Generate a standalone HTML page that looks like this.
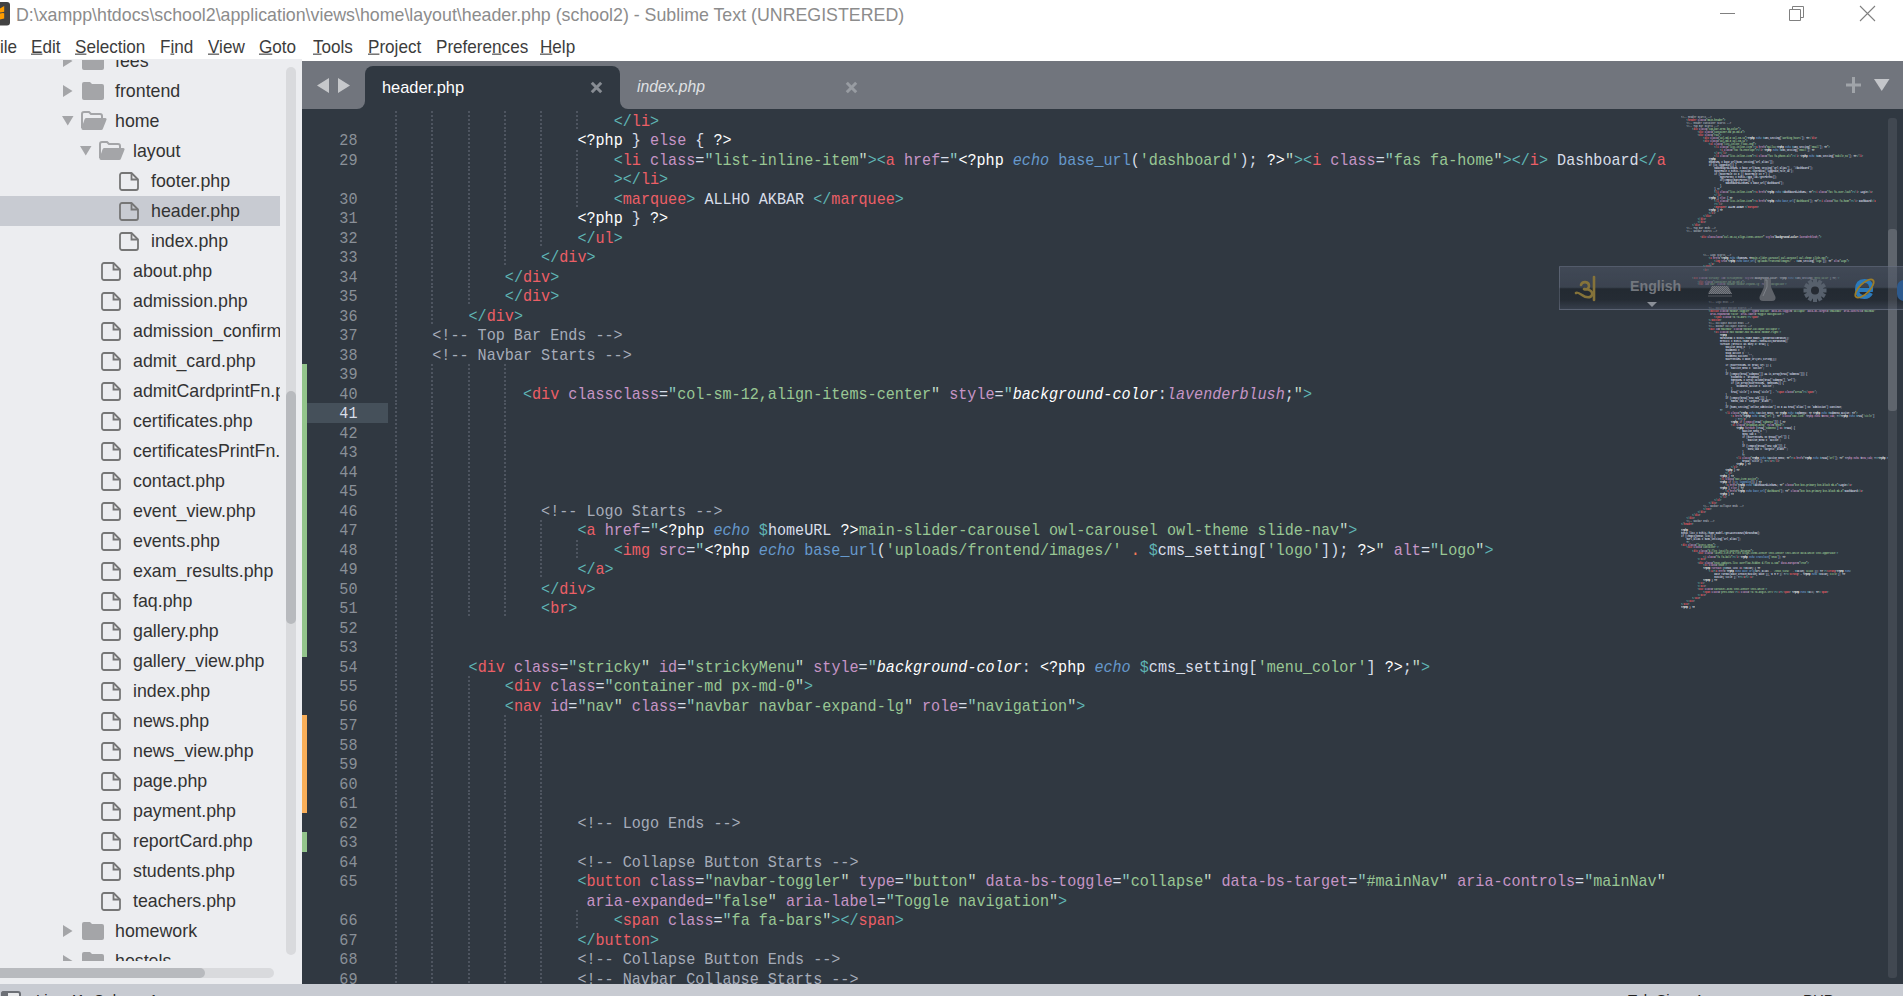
<!DOCTYPE html><html><head><meta charset="utf-8"><style>
*{margin:0;padding:0;box-sizing:border-box}
html,body{width:1903px;height:996px;overflow:hidden;background:#fff;position:relative;font-family:"Liberation Sans",sans-serif}
.abs{position:absolute}
#title{left:16px;top:4px;font-size:17.8px;color:#8c8c8c;white-space:pre;line-height:22px}
.menu{position:absolute;top:36px;font-size:17.1px;color:#3c3c3c;white-space:pre;line-height:20px;transform:scaleY(1.1);transform-origin:0 0}
.menu u{text-decoration:underline;text-underline-offset:1px;text-decoration-thickness:1px}
#sidebar{left:0;top:59px;width:302px;height:925px;background:#ecedf0;overflow:hidden}
#tree{position:absolute;left:0;top:1px;width:280px;height:901px;overflow:hidden}
.row{position:absolute;left:0;width:280px;height:30px}
.row.sel{background:#c8cbd2}
.rt{position:absolute;top:4px;font-size:17.8px;color:#333;white-space:pre;line-height:22px}
#editor{left:302px;top:61px;width:1601px;height:922.5px;background:#303841;overflow:hidden}
.code{position:absolute;left:0;white-space:pre;font-family:"Liberation Mono",monospace;font-size:15.12px;line-height:19.5px;height:19.5px;color:#d8dee9;transform:scaleY(1.08);transform-origin:0 3px}
.ln{position:absolute;width:60px;text-align:right;font-family:"Liberation Mono",monospace;font-size:15.12px;line-height:19.5px;color:#8a9098;transform:scaleY(1.08);transform-origin:0 3px}
.t{color:#ec5f66}.p{color:#5fb4b4}.a{color:#c695c6}.s{color:#99c794}.q{color:#8cc8c0}.q2{color:#c4d8c6}
.w{color:#ffffff}.f{color:#d8dee9}.c{color:#a6acb9}.k{color:#c695c6}.e{color:#6699cc;font-style:italic}
.fn{color:#6699cc}.v{color:#5fb4b4}.o{color:#f97b58}.ci{color:#ffffff;font-style:italic}.cv{color:#c695c6;font-style:italic}
.g{position:absolute;width:2px;background:repeating-linear-gradient(to bottom,#4e5560 0,#4e5560 2px,transparent 2px,transparent 4px)}
#mini{position:absolute;left:1379px;top:54.8px;transform-origin:0 0;transform:scale(0.1533);width:1400px}
#mini .code{position:relative;font-weight:bold;transform:scaleY(1.1);transform-origin:0 60%}
#status{left:0;top:983.5px;width:1903px;height:13px;background:#c8cbd2;overflow:hidden}
</style></head><body><svg class="abs" style="left:0;top:0" width="12" height="28" viewBox="0 0 12 28"><path d="M-14 5a3 3 0 0 1 3-3H7a3 3 0 0 1 3 3V22.5a3 3 0 0 1-3 3H-11z" fill="#424242"/><path d="M0 8.5Q2 7 4.2 6V11.8Q2 12.2 0 12.6z" fill="#ff9d00"/><path d="M0 13.6Q2 12.8 4.2 13.2V18.6Q2 19.3 0 19.6z" fill="#ff9d00"/></svg><div id="title" class="abs">D:\xampp\htdocs\school2\application\views\home\layout\header.php (school2) - Sublime Text (UNREGISTERED)</div><div class="abs" style="left:1720px;top:13px;width:15px;height:1px;background:#808080"></div><svg class="abs" style="left:1788px;top:5px" width="18" height="18"><path d="M1.5 4.5H12.5V15.5H1.5z M4.5 4.5V1.5H15.5V12.5H12.5" fill="none" stroke="#808080" stroke-width="1"/></svg><svg class="abs" style="left:1859px;top:5px" width="18" height="18"><path d="M1 1L16 16M16 1L1 16" stroke="#808080" stroke-width="1.1"/></svg><div class="menu" style="left:0px">ile</div><div class="menu" style="left:31px"><u>E</u>dit</div><div class="menu" style="left:75px"><u>S</u>election</div><div class="menu" style="left:160px">F<u>i</u>nd</div><div class="menu" style="left:208px"><u>V</u>iew</div><div class="menu" style="left:259px"><u>G</u>oto</div><div class="menu" style="left:313px"><u>T</u>ools</div><div class="menu" style="left:368px"><u>P</u>roject</div><div class="menu" style="left:436px">Prefere<u>n</u>ces</div><div class="menu" style="left:540px"><u>H</u>elp</div><div id="sidebar" class="abs"><div id="tree"><div class="row" style="top:-14px"><svg class="abs" style="left:63px;top:9px" width="10" height="12"><path d="M0 0L9.5 6L0 12z" fill="#a4a5a8"/></svg><svg class="abs" style="left:82px;top:6px" width="23" height="19" viewBox="0 0 23 19"><path d="M0 2a2 2 0 0 1 2-2h6l2 2h10a2 2 0 0 1 2 2v12a2 2 0 0 1-2 2H2a2 2 0 0 1-2-2z" fill="#a4a5a8"/></svg><div class="rt" style="left:115px">fees</div></div><div class="row" style="top:16px"><svg class="abs" style="left:63px;top:9px" width="10" height="12"><path d="M0 0L9.5 6L0 12z" fill="#a4a5a8"/></svg><svg class="abs" style="left:82px;top:6px" width="23" height="19" viewBox="0 0 23 19"><path d="M0 2a2 2 0 0 1 2-2h6l2 2h10a2 2 0 0 1 2 2v12a2 2 0 0 1-2 2H2a2 2 0 0 1-2-2z" fill="#a4a5a8"/></svg><div class="rt" style="left:115px">frontend</div></div><div class="row" style="top:46px"><svg class="abs" style="left:62px;top:10px" width="12" height="10"><path d="M0 0H11.5L5.75 9.5z" fill="#a4a5a8"/></svg><svg class="abs" style="left:81px;top:5px" width="27" height="20" viewBox="0 0 27 20"><path d="M1 17V3a2 2 0 0 1 2-2h5l2 2h9a2 2 0 0 1 2 2v2" fill="none" stroke="#a4a5a8" stroke-width="2"/><path d="M5 7h19a1.5 1.5 0 0 1 1.4 2L22 17.5a2 2 0 0 1-2 1.5H2a1.5 1.5 0 0 1-1.4-2L3.6 8.3A2 2 0 0 1 5 7z" fill="#a4a5a8"/></svg><div class="rt" style="left:115px">home</div></div><div class="row" style="top:76px"><svg class="abs" style="left:80px;top:10px" width="12" height="10"><path d="M0 0H11.5L5.75 9.5z" fill="#a4a5a8"/></svg><svg class="abs" style="left:99px;top:5px" width="27" height="20" viewBox="0 0 27 20"><path d="M1 17V3a2 2 0 0 1 2-2h5l2 2h9a2 2 0 0 1 2 2v2" fill="none" stroke="#a4a5a8" stroke-width="2"/><path d="M5 7h19a1.5 1.5 0 0 1 1.4 2L22 17.5a2 2 0 0 1-2 1.5H2a1.5 1.5 0 0 1-1.4-2L3.6 8.3A2 2 0 0 1 5 7z" fill="#a4a5a8"/></svg><div class="rt" style="left:133px">layout</div></div><div class="row" style="top:106px"><svg class="abs" style="left:119px;top:6px" width="20" height="19" viewBox="0 0 20 19"><path d="M3 1h9.5L19 7.5V16a2 2 0 0 1-2 2H3a2 2 0 0 1-2-2V3a2 2 0 0 1 2-2z" fill="none" stroke="#767676" stroke-width="1.8" stroke-linejoin="round"/><path d="M12.5 1v6.5H19" fill="none" stroke="#767676" stroke-width="1.8"/></svg><div class="rt" style="left:151px">footer.php</div></div><div class="row sel" style="top:136px"><svg class="abs" style="left:119px;top:6px" width="20" height="19" viewBox="0 0 20 19"><path d="M3 1h9.5L19 7.5V16a2 2 0 0 1-2 2H3a2 2 0 0 1-2-2V3a2 2 0 0 1 2-2z" fill="none" stroke="#767676" stroke-width="1.8" stroke-linejoin="round"/><path d="M12.5 1v6.5H19" fill="none" stroke="#767676" stroke-width="1.8"/></svg><div class="rt" style="left:151px">header.php</div></div><div class="row" style="top:166px"><svg class="abs" style="left:119px;top:6px" width="20" height="19" viewBox="0 0 20 19"><path d="M3 1h9.5L19 7.5V16a2 2 0 0 1-2 2H3a2 2 0 0 1-2-2V3a2 2 0 0 1 2-2z" fill="none" stroke="#767676" stroke-width="1.8" stroke-linejoin="round"/><path d="M12.5 1v6.5H19" fill="none" stroke="#767676" stroke-width="1.8"/></svg><div class="rt" style="left:151px">index.php</div></div><div class="row" style="top:196px"><svg class="abs" style="left:101px;top:6px" width="20" height="19" viewBox="0 0 20 19"><path d="M3 1h9.5L19 7.5V16a2 2 0 0 1-2 2H3a2 2 0 0 1-2-2V3a2 2 0 0 1 2-2z" fill="none" stroke="#767676" stroke-width="1.8" stroke-linejoin="round"/><path d="M12.5 1v6.5H19" fill="none" stroke="#767676" stroke-width="1.8"/></svg><div class="rt" style="left:133px">about.php</div></div><div class="row" style="top:226px"><svg class="abs" style="left:101px;top:6px" width="20" height="19" viewBox="0 0 20 19"><path d="M3 1h9.5L19 7.5V16a2 2 0 0 1-2 2H3a2 2 0 0 1-2-2V3a2 2 0 0 1 2-2z" fill="none" stroke="#767676" stroke-width="1.8" stroke-linejoin="round"/><path d="M12.5 1v6.5H19" fill="none" stroke="#767676" stroke-width="1.8"/></svg><div class="rt" style="left:133px">admission.php</div></div><div class="row" style="top:256px"><svg class="abs" style="left:101px;top:6px" width="20" height="19" viewBox="0 0 20 19"><path d="M3 1h9.5L19 7.5V16a2 2 0 0 1-2 2H3a2 2 0 0 1-2-2V3a2 2 0 0 1 2-2z" fill="none" stroke="#767676" stroke-width="1.8" stroke-linejoin="round"/><path d="M12.5 1v6.5H19" fill="none" stroke="#767676" stroke-width="1.8"/></svg><div class="rt" style="left:133px">admission_confirm.php</div></div><div class="row" style="top:286px"><svg class="abs" style="left:101px;top:6px" width="20" height="19" viewBox="0 0 20 19"><path d="M3 1h9.5L19 7.5V16a2 2 0 0 1-2 2H3a2 2 0 0 1-2-2V3a2 2 0 0 1 2-2z" fill="none" stroke="#767676" stroke-width="1.8" stroke-linejoin="round"/><path d="M12.5 1v6.5H19" fill="none" stroke="#767676" stroke-width="1.8"/></svg><div class="rt" style="left:133px">admit_card.php</div></div><div class="row" style="top:316px"><svg class="abs" style="left:101px;top:6px" width="20" height="19" viewBox="0 0 20 19"><path d="M3 1h9.5L19 7.5V16a2 2 0 0 1-2 2H3a2 2 0 0 1-2-2V3a2 2 0 0 1 2-2z" fill="none" stroke="#767676" stroke-width="1.8" stroke-linejoin="round"/><path d="M12.5 1v6.5H19" fill="none" stroke="#767676" stroke-width="1.8"/></svg><div class="rt" style="left:133px">admitCardprintFn.php</div></div><div class="row" style="top:346px"><svg class="abs" style="left:101px;top:6px" width="20" height="19" viewBox="0 0 20 19"><path d="M3 1h9.5L19 7.5V16a2 2 0 0 1-2 2H3a2 2 0 0 1-2-2V3a2 2 0 0 1 2-2z" fill="none" stroke="#767676" stroke-width="1.8" stroke-linejoin="round"/><path d="M12.5 1v6.5H19" fill="none" stroke="#767676" stroke-width="1.8"/></svg><div class="rt" style="left:133px">certificates.php</div></div><div class="row" style="top:376px"><svg class="abs" style="left:101px;top:6px" width="20" height="19" viewBox="0 0 20 19"><path d="M3 1h9.5L19 7.5V16a2 2 0 0 1-2 2H3a2 2 0 0 1-2-2V3a2 2 0 0 1 2-2z" fill="none" stroke="#767676" stroke-width="1.8" stroke-linejoin="round"/><path d="M12.5 1v6.5H19" fill="none" stroke="#767676" stroke-width="1.8"/></svg><div class="rt" style="left:133px">certificatesPrintFn.php</div></div><div class="row" style="top:406px"><svg class="abs" style="left:101px;top:6px" width="20" height="19" viewBox="0 0 20 19"><path d="M3 1h9.5L19 7.5V16a2 2 0 0 1-2 2H3a2 2 0 0 1-2-2V3a2 2 0 0 1 2-2z" fill="none" stroke="#767676" stroke-width="1.8" stroke-linejoin="round"/><path d="M12.5 1v6.5H19" fill="none" stroke="#767676" stroke-width="1.8"/></svg><div class="rt" style="left:133px">contact.php</div></div><div class="row" style="top:436px"><svg class="abs" style="left:101px;top:6px" width="20" height="19" viewBox="0 0 20 19"><path d="M3 1h9.5L19 7.5V16a2 2 0 0 1-2 2H3a2 2 0 0 1-2-2V3a2 2 0 0 1 2-2z" fill="none" stroke="#767676" stroke-width="1.8" stroke-linejoin="round"/><path d="M12.5 1v6.5H19" fill="none" stroke="#767676" stroke-width="1.8"/></svg><div class="rt" style="left:133px">event_view.php</div></div><div class="row" style="top:466px"><svg class="abs" style="left:101px;top:6px" width="20" height="19" viewBox="0 0 20 19"><path d="M3 1h9.5L19 7.5V16a2 2 0 0 1-2 2H3a2 2 0 0 1-2-2V3a2 2 0 0 1 2-2z" fill="none" stroke="#767676" stroke-width="1.8" stroke-linejoin="round"/><path d="M12.5 1v6.5H19" fill="none" stroke="#767676" stroke-width="1.8"/></svg><div class="rt" style="left:133px">events.php</div></div><div class="row" style="top:496px"><svg class="abs" style="left:101px;top:6px" width="20" height="19" viewBox="0 0 20 19"><path d="M3 1h9.5L19 7.5V16a2 2 0 0 1-2 2H3a2 2 0 0 1-2-2V3a2 2 0 0 1 2-2z" fill="none" stroke="#767676" stroke-width="1.8" stroke-linejoin="round"/><path d="M12.5 1v6.5H19" fill="none" stroke="#767676" stroke-width="1.8"/></svg><div class="rt" style="left:133px">exam_results.php</div></div><div class="row" style="top:526px"><svg class="abs" style="left:101px;top:6px" width="20" height="19" viewBox="0 0 20 19"><path d="M3 1h9.5L19 7.5V16a2 2 0 0 1-2 2H3a2 2 0 0 1-2-2V3a2 2 0 0 1 2-2z" fill="none" stroke="#767676" stroke-width="1.8" stroke-linejoin="round"/><path d="M12.5 1v6.5H19" fill="none" stroke="#767676" stroke-width="1.8"/></svg><div class="rt" style="left:133px">faq.php</div></div><div class="row" style="top:556px"><svg class="abs" style="left:101px;top:6px" width="20" height="19" viewBox="0 0 20 19"><path d="M3 1h9.5L19 7.5V16a2 2 0 0 1-2 2H3a2 2 0 0 1-2-2V3a2 2 0 0 1 2-2z" fill="none" stroke="#767676" stroke-width="1.8" stroke-linejoin="round"/><path d="M12.5 1v6.5H19" fill="none" stroke="#767676" stroke-width="1.8"/></svg><div class="rt" style="left:133px">gallery.php</div></div><div class="row" style="top:586px"><svg class="abs" style="left:101px;top:6px" width="20" height="19" viewBox="0 0 20 19"><path d="M3 1h9.5L19 7.5V16a2 2 0 0 1-2 2H3a2 2 0 0 1-2-2V3a2 2 0 0 1 2-2z" fill="none" stroke="#767676" stroke-width="1.8" stroke-linejoin="round"/><path d="M12.5 1v6.5H19" fill="none" stroke="#767676" stroke-width="1.8"/></svg><div class="rt" style="left:133px">gallery_view.php</div></div><div class="row" style="top:616px"><svg class="abs" style="left:101px;top:6px" width="20" height="19" viewBox="0 0 20 19"><path d="M3 1h9.5L19 7.5V16a2 2 0 0 1-2 2H3a2 2 0 0 1-2-2V3a2 2 0 0 1 2-2z" fill="none" stroke="#767676" stroke-width="1.8" stroke-linejoin="round"/><path d="M12.5 1v6.5H19" fill="none" stroke="#767676" stroke-width="1.8"/></svg><div class="rt" style="left:133px">index.php</div></div><div class="row" style="top:646px"><svg class="abs" style="left:101px;top:6px" width="20" height="19" viewBox="0 0 20 19"><path d="M3 1h9.5L19 7.5V16a2 2 0 0 1-2 2H3a2 2 0 0 1-2-2V3a2 2 0 0 1 2-2z" fill="none" stroke="#767676" stroke-width="1.8" stroke-linejoin="round"/><path d="M12.5 1v6.5H19" fill="none" stroke="#767676" stroke-width="1.8"/></svg><div class="rt" style="left:133px">news.php</div></div><div class="row" style="top:676px"><svg class="abs" style="left:101px;top:6px" width="20" height="19" viewBox="0 0 20 19"><path d="M3 1h9.5L19 7.5V16a2 2 0 0 1-2 2H3a2 2 0 0 1-2-2V3a2 2 0 0 1 2-2z" fill="none" stroke="#767676" stroke-width="1.8" stroke-linejoin="round"/><path d="M12.5 1v6.5H19" fill="none" stroke="#767676" stroke-width="1.8"/></svg><div class="rt" style="left:133px">news_view.php</div></div><div class="row" style="top:706px"><svg class="abs" style="left:101px;top:6px" width="20" height="19" viewBox="0 0 20 19"><path d="M3 1h9.5L19 7.5V16a2 2 0 0 1-2 2H3a2 2 0 0 1-2-2V3a2 2 0 0 1 2-2z" fill="none" stroke="#767676" stroke-width="1.8" stroke-linejoin="round"/><path d="M12.5 1v6.5H19" fill="none" stroke="#767676" stroke-width="1.8"/></svg><div class="rt" style="left:133px">page.php</div></div><div class="row" style="top:736px"><svg class="abs" style="left:101px;top:6px" width="20" height="19" viewBox="0 0 20 19"><path d="M3 1h9.5L19 7.5V16a2 2 0 0 1-2 2H3a2 2 0 0 1-2-2V3a2 2 0 0 1 2-2z" fill="none" stroke="#767676" stroke-width="1.8" stroke-linejoin="round"/><path d="M12.5 1v6.5H19" fill="none" stroke="#767676" stroke-width="1.8"/></svg><div class="rt" style="left:133px">payment.php</div></div><div class="row" style="top:766px"><svg class="abs" style="left:101px;top:6px" width="20" height="19" viewBox="0 0 20 19"><path d="M3 1h9.5L19 7.5V16a2 2 0 0 1-2 2H3a2 2 0 0 1-2-2V3a2 2 0 0 1 2-2z" fill="none" stroke="#767676" stroke-width="1.8" stroke-linejoin="round"/><path d="M12.5 1v6.5H19" fill="none" stroke="#767676" stroke-width="1.8"/></svg><div class="rt" style="left:133px">reportCard.php</div></div><div class="row" style="top:796px"><svg class="abs" style="left:101px;top:6px" width="20" height="19" viewBox="0 0 20 19"><path d="M3 1h9.5L19 7.5V16a2 2 0 0 1-2 2H3a2 2 0 0 1-2-2V3a2 2 0 0 1 2-2z" fill="none" stroke="#767676" stroke-width="1.8" stroke-linejoin="round"/><path d="M12.5 1v6.5H19" fill="none" stroke="#767676" stroke-width="1.8"/></svg><div class="rt" style="left:133px">students.php</div></div><div class="row" style="top:826px"><svg class="abs" style="left:101px;top:6px" width="20" height="19" viewBox="0 0 20 19"><path d="M3 1h9.5L19 7.5V16a2 2 0 0 1-2 2H3a2 2 0 0 1-2-2V3a2 2 0 0 1 2-2z" fill="none" stroke="#767676" stroke-width="1.8" stroke-linejoin="round"/><path d="M12.5 1v6.5H19" fill="none" stroke="#767676" stroke-width="1.8"/></svg><div class="rt" style="left:133px">teachers.php</div></div><div class="row" style="top:856px"><svg class="abs" style="left:63px;top:9px" width="10" height="12"><path d="M0 0L9.5 6L0 12z" fill="#a4a5a8"/></svg><svg class="abs" style="left:82px;top:6px" width="23" height="19" viewBox="0 0 23 19"><path d="M0 2a2 2 0 0 1 2-2h6l2 2h10a2 2 0 0 1 2 2v12a2 2 0 0 1-2 2H2a2 2 0 0 1-2-2z" fill="#a4a5a8"/></svg><div class="rt" style="left:115px">homework</div></div><div class="row" style="top:886px"><svg class="abs" style="left:63px;top:9px" width="10" height="12"><path d="M0 0L9.5 6L0 12z" fill="#a4a5a8"/></svg><svg class="abs" style="left:82px;top:6px" width="23" height="19" viewBox="0 0 23 19"><path d="M0 2a2 2 0 0 1 2-2h6l2 2h10a2 2 0 0 1 2 2v12a2 2 0 0 1-2 2H2a2 2 0 0 1-2-2z" fill="#a4a5a8"/></svg><div class="rt" style="left:115px">hostels</div></div></div><div class="abs" style="left:286px;top:8px;width:10px;height:888px;background:#d9dadd;border-radius:5px"></div><div class="abs" style="left:286px;top:332px;width:10px;height:233px;background:#b8babe;border-radius:5px"></div><div class="abs" style="left:0px;top:909px;width:274px;height:10px;background:#d9dadd;border-radius:0 5px 5px 0"></div><div class="abs" style="left:0px;top:909px;width:205px;height:10px;background:#b8babe;border-radius:0 5px 5px 0"></div></div><div id="editor" class="abs"><div class="abs" style="left:0;top:0;width:63px;height:48px;background:#71757d;border-bottom-right-radius:8px"></div><div class="abs" style="left:0;top:0;width:1601px;height:40px;background:#71757d"></div><div class="abs" style="left:318px;top:0;width:1283px;height:48px;background:#71757d;border-bottom-left-radius:8px"></div><div class="abs" style="left:63px;top:4.5px;width:255px;height:44px;background:#303841;border-radius:8px 8px 0 0"></div><svg class="abs" style="left:14px;top:16px" width="40" height="17"><path d="M1 8.5L13 1V16z M34 8.5L22 1V16z" fill="#c6c8cb"/></svg><div class="abs" style="left:80px;top:15.5px;font-size:16.4px;color:#fff;white-space:pre;line-height:20px">header.php</div><svg class="abs" style="left:288px;top:20px" width="13" height="13"><path d="M1.8 1.8L11.2 11.2M11.2 1.8L1.8 11.2" stroke="#878c93" stroke-width="3"/></svg><div class="abs" style="left:335px;top:15.5px;font-size:15.7px;font-style:italic;color:#dfe0e3;white-space:pre;line-height:20px">index.php</div><svg class="abs" style="left:543px;top:20px" width="13" height="13"><path d="M1.8 1.8L11.2 11.2M11.2 1.8L1.8 11.2" stroke="#989ca2" stroke-width="3"/></svg><svg class="abs" style="left:1544px;top:16px" width="16" height="16"><path d="M7.5 0V16M0 8H15" stroke="#a0a4a9" stroke-width="3"/></svg><svg class="abs" style="left:1571.5px;top:18px" width="17" height="13"><path d="M0 0H15.5L7.75 12z" fill="#c4c6ca"/></svg><div class="g" style="left:93px;top:49.5px;height:19.5px"></div><div class="g" style="left:129px;top:49.5px;height:19.5px"></div><div class="g" style="left:166px;top:49.5px;height:19.5px"></div><div class="g" style="left:202px;top:49.5px;height:19.5px"></div><div class="g" style="left:238px;top:49.5px;height:19.5px"></div><div class="g" style="left:274px;top:49.5px;height:19.5px"></div><div class="code" style="left:311.68px;top:50.5px"><span class="p">&lt;/</span><span class="t">li</span><span class="p">&gt;</span></div><div class="ln" style="left:-4.5px;top:70.0px;color:#8a9098">28</div><div class="g" style="left:93px;top:69.0px;height:19.5px"></div><div class="g" style="left:129px;top:69.0px;height:19.5px"></div><div class="g" style="left:166px;top:69.0px;height:19.5px"></div><div class="g" style="left:202px;top:69.0px;height:19.5px"></div><div class="g" style="left:238px;top:69.0px;height:19.5px"></div><div class="code" style="left:275.40px;top:70.0px"><span class="w">&lt;?php</span> <span class="f">}</span> <span class="k">else</span> <span class="f">{</span> <span class="w">?&gt;</span></div><div class="ln" style="left:-4.5px;top:89.5px;color:#8a9098">29</div><div class="g" style="left:93px;top:88.5px;height:19.5px"></div><div class="g" style="left:129px;top:88.5px;height:19.5px"></div><div class="g" style="left:166px;top:88.5px;height:19.5px"></div><div class="g" style="left:202px;top:88.5px;height:19.5px"></div><div class="g" style="left:238px;top:88.5px;height:19.5px"></div><div class="g" style="left:274px;top:88.5px;height:19.5px"></div><div class="code" style="left:311.68px;top:89.5px"><span class="p">&lt;</span><span class="t">li</span> <span class="a">class</span><span class="f">=</span><span class="q">"</span><span class="s">list-inline-item</span><span class="q2">"</span><span class="p">&gt;</span><span class="p">&lt;</span><span class="t">a</span> <span class="a">href</span><span class="f">=</span><span class="q">"</span><span class="w">&lt;?php</span> <span class="e">echo</span> <span class="fn">base_url</span><span class="f">(</span><span class="s">'dashboard'</span><span class="f">)</span><span class="f">;</span> <span class="w">?&gt;</span><span class="q2">"</span><span class="p">&gt;</span><span class="p">&lt;</span><span class="t">i</span> <span class="a">class</span><span class="f">=</span><span class="q">"</span><span class="s">fas fa-home</span><span class="q2">"</span><span class="p">&gt;</span><span class="p">&lt;/</span><span class="t">i</span><span class="p">&gt;</span><span class="f"> Dashboard</span><span class="p">&lt;/</span><span class="t">a</span></div><div class="g" style="left:93px;top:108.0px;height:19.5px"></div><div class="g" style="left:129px;top:108.0px;height:19.5px"></div><div class="g" style="left:166px;top:108.0px;height:19.5px"></div><div class="g" style="left:202px;top:108.0px;height:19.5px"></div><div class="g" style="left:238px;top:108.0px;height:19.5px"></div><div class="g" style="left:274px;top:108.0px;height:19.5px"></div><div class="code" style="left:311.68px;top:109.0px"><span class="p">&gt;</span><span class="p">&lt;/</span><span class="t">li</span><span class="p">&gt;</span></div><div class="ln" style="left:-4.5px;top:128.5px;color:#8a9098">30</div><div class="g" style="left:93px;top:127.5px;height:19.5px"></div><div class="g" style="left:129px;top:127.5px;height:19.5px"></div><div class="g" style="left:166px;top:127.5px;height:19.5px"></div><div class="g" style="left:202px;top:127.5px;height:19.5px"></div><div class="g" style="left:238px;top:127.5px;height:19.5px"></div><div class="g" style="left:274px;top:127.5px;height:19.5px"></div><div class="code" style="left:311.68px;top:128.5px"><span class="p">&lt;</span><span class="t">marquee</span><span class="p">&gt;</span><span class="f"> ALLHO AKBAR </span><span class="p">&lt;/</span><span class="t">marquee</span><span class="p">&gt;</span></div><div class="ln" style="left:-4.5px;top:148.0px;color:#8a9098">31</div><div class="g" style="left:93px;top:147.0px;height:19.5px"></div><div class="g" style="left:129px;top:147.0px;height:19.5px"></div><div class="g" style="left:166px;top:147.0px;height:19.5px"></div><div class="g" style="left:202px;top:147.0px;height:19.5px"></div><div class="g" style="left:238px;top:147.0px;height:19.5px"></div><div class="code" style="left:275.40px;top:148.0px"><span class="w">&lt;?php</span> <span class="f">}</span> <span class="w">?&gt;</span></div><div class="ln" style="left:-4.5px;top:167.5px;color:#8a9098">32</div><div class="g" style="left:93px;top:166.5px;height:19.5px"></div><div class="g" style="left:129px;top:166.5px;height:19.5px"></div><div class="g" style="left:166px;top:166.5px;height:19.5px"></div><div class="g" style="left:202px;top:166.5px;height:19.5px"></div><div class="g" style="left:238px;top:166.5px;height:19.5px"></div><div class="code" style="left:275.40px;top:167.5px"><span class="p">&lt;/</span><span class="t">ul</span><span class="p">&gt;</span></div><div class="ln" style="left:-4.5px;top:187.0px;color:#8a9098">33</div><div class="g" style="left:93px;top:186.0px;height:19.5px"></div><div class="g" style="left:129px;top:186.0px;height:19.5px"></div><div class="g" style="left:166px;top:186.0px;height:19.5px"></div><div class="g" style="left:202px;top:186.0px;height:19.5px"></div><div class="code" style="left:239.12px;top:187.0px"><span class="p">&lt;/</span><span class="t">div</span><span class="p">&gt;</span></div><div class="ln" style="left:-4.5px;top:206.5px;color:#8a9098">34</div><div class="g" style="left:93px;top:205.5px;height:19.5px"></div><div class="g" style="left:129px;top:205.5px;height:19.5px"></div><div class="g" style="left:166px;top:205.5px;height:19.5px"></div><div class="code" style="left:202.84px;top:206.5px"><span class="p">&lt;/</span><span class="t">div</span><span class="p">&gt;</span></div><div class="ln" style="left:-4.5px;top:226.0px;color:#8a9098">35</div><div class="g" style="left:93px;top:225.0px;height:19.5px"></div><div class="g" style="left:129px;top:225.0px;height:19.5px"></div><div class="g" style="left:166px;top:225.0px;height:19.5px"></div><div class="code" style="left:202.84px;top:226.0px"><span class="p">&lt;/</span><span class="t">div</span><span class="p">&gt;</span></div><div class="ln" style="left:-4.5px;top:245.5px;color:#8a9098">36</div><div class="g" style="left:93px;top:244.5px;height:19.5px"></div><div class="g" style="left:129px;top:244.5px;height:19.5px"></div><div class="code" style="left:166.56px;top:245.5px"><span class="p">&lt;/</span><span class="t">div</span><span class="p">&gt;</span></div><div class="ln" style="left:-4.5px;top:265.0px;color:#8a9098">37</div><div class="g" style="left:93px;top:264.0px;height:19.5px"></div><div class="code" style="left:130.28px;top:265.0px"><span class="c">&lt;!-- Top Bar Ends --&gt;</span></div><div class="ln" style="left:-4.5px;top:284.5px;color:#8a9098">38</div><div class="g" style="left:93px;top:283.5px;height:19.5px"></div><div class="code" style="left:130.28px;top:284.5px"><span class="c">&lt;!-- Navbar Starts --&gt;</span></div><div class="ln" style="left:-4.5px;top:304.0px;color:#8a9098">39</div><div class="g" style="left:93px;top:303.0px;height:19.5px"></div><div class="g" style="left:129px;top:303.0px;height:19.5px"></div><div class="g" style="left:166px;top:303.0px;height:19.5px"></div><div class="g" style="left:202px;top:303.0px;height:19.5px"></div><div class="ln" style="left:-4.5px;top:323.5px;color:#8a9098">40</div><div class="g" style="left:93px;top:322.5px;height:19.5px"></div><div class="g" style="left:129px;top:322.5px;height:19.5px"></div><div class="g" style="left:166px;top:322.5px;height:19.5px"></div><div class="g" style="left:202px;top:322.5px;height:19.5px"></div><div class="code" style="left:220.98px;top:323.5px"><span class="p">&lt;</span><span class="t">div</span> <span class="a">classclass</span><span class="f">=</span><span class="q">"</span><span class="s">col-sm-12,align-items-center</span><span class="q2">"</span> <span class="a">style</span><span class="f">=</span><span class="q">"</span><span class="ci">background-color</span><span class="f">:</span><span class="cv">lavenderblush</span><span class="f">;</span><span class="q2">"</span><span class="p">&gt;</span></div><div class="abs" style="left:5px;top:342.0px;width:81px;height:19.5px;background:#45505a"></div><div class="ln" style="left:-4.5px;top:343.0px;color:#d8dee9">41</div><div class="g" style="left:93px;top:342.0px;height:19.5px"></div><div class="g" style="left:129px;top:342.0px;height:19.5px"></div><div class="g" style="left:166px;top:342.0px;height:19.5px"></div><div class="g" style="left:202px;top:342.0px;height:19.5px"></div><div class="ln" style="left:-4.5px;top:362.5px;color:#8a9098">42</div><div class="g" style="left:93px;top:361.5px;height:19.5px"></div><div class="g" style="left:129px;top:361.5px;height:19.5px"></div><div class="g" style="left:166px;top:361.5px;height:19.5px"></div><div class="g" style="left:202px;top:361.5px;height:19.5px"></div><div class="ln" style="left:-4.5px;top:382.0px;color:#8a9098">43</div><div class="g" style="left:93px;top:381.0px;height:19.5px"></div><div class="g" style="left:129px;top:381.0px;height:19.5px"></div><div class="g" style="left:166px;top:381.0px;height:19.5px"></div><div class="g" style="left:202px;top:381.0px;height:19.5px"></div><div class="ln" style="left:-4.5px;top:401.5px;color:#8a9098">44</div><div class="g" style="left:93px;top:400.5px;height:19.5px"></div><div class="g" style="left:129px;top:400.5px;height:19.5px"></div><div class="g" style="left:166px;top:400.5px;height:19.5px"></div><div class="g" style="left:202px;top:400.5px;height:19.5px"></div><div class="ln" style="left:-4.5px;top:421.0px;color:#8a9098">45</div><div class="g" style="left:93px;top:420.0px;height:19.5px"></div><div class="g" style="left:129px;top:420.0px;height:19.5px"></div><div class="g" style="left:166px;top:420.0px;height:19.5px"></div><div class="g" style="left:202px;top:420.0px;height:19.5px"></div><div class="ln" style="left:-4.5px;top:440.5px;color:#8a9098">46</div><div class="g" style="left:93px;top:439.5px;height:19.5px"></div><div class="g" style="left:129px;top:439.5px;height:19.5px"></div><div class="g" style="left:166px;top:439.5px;height:19.5px"></div><div class="g" style="left:202px;top:439.5px;height:19.5px"></div><div class="code" style="left:239.12px;top:440.5px"><span class="c">&lt;!-- Logo Starts --&gt;</span></div><div class="ln" style="left:-4.5px;top:460.0px;color:#8a9098">47</div><div class="g" style="left:93px;top:459.0px;height:19.5px"></div><div class="g" style="left:129px;top:459.0px;height:19.5px"></div><div class="g" style="left:166px;top:459.0px;height:19.5px"></div><div class="g" style="left:202px;top:459.0px;height:19.5px"></div><div class="g" style="left:238px;top:459.0px;height:19.5px"></div><div class="code" style="left:275.40px;top:460.0px"><span class="p">&lt;</span><span class="t">a</span> <span class="a">href</span><span class="f">=</span><span class="q">"</span><span class="w">&lt;?php</span> <span class="e">echo</span> <span class="v">$</span><span class="f">homeURL</span> <span class="w">?&gt;</span><span class="s">main-slider-carousel owl-carousel owl-theme slide-nav</span><span class="q2">"</span><span class="p">&gt;</span></div><div class="ln" style="left:-4.5px;top:479.5px;color:#8a9098">48</div><div class="g" style="left:93px;top:478.5px;height:19.5px"></div><div class="g" style="left:129px;top:478.5px;height:19.5px"></div><div class="g" style="left:166px;top:478.5px;height:19.5px"></div><div class="g" style="left:202px;top:478.5px;height:19.5px"></div><div class="g" style="left:238px;top:478.5px;height:19.5px"></div><div class="g" style="left:274px;top:478.5px;height:19.5px"></div><div class="code" style="left:311.68px;top:479.5px"><span class="p">&lt;</span><span class="t">img</span> <span class="a">src</span><span class="f">=</span><span class="q">"</span><span class="w">&lt;?php</span> <span class="e">echo</span> <span class="fn">base_url</span><span class="f">(</span><span class="s">'uploads/frontend/images/'</span> <span class="o">.</span> <span class="v">$</span><span class="f">cms_setting</span><span class="f">[</span><span class="s">'logo'</span><span class="f">]</span><span class="f">)</span><span class="f">;</span> <span class="w">?&gt;</span><span class="q2">"</span> <span class="a">alt</span><span class="f">=</span><span class="q">"</span><span class="s">Logo</span><span class="q2">"</span><span class="p">&gt;</span></div><div class="ln" style="left:-4.5px;top:499.0px;color:#8a9098">49</div><div class="g" style="left:93px;top:498.0px;height:19.5px"></div><div class="g" style="left:129px;top:498.0px;height:19.5px"></div><div class="g" style="left:166px;top:498.0px;height:19.5px"></div><div class="g" style="left:202px;top:498.0px;height:19.5px"></div><div class="g" style="left:238px;top:498.0px;height:19.5px"></div><div class="code" style="left:275.40px;top:499.0px"><span class="p">&lt;/</span><span class="t">a</span><span class="p">&gt;</span></div><div class="ln" style="left:-4.5px;top:518.5px;color:#8a9098">50</div><div class="g" style="left:93px;top:517.5px;height:19.5px"></div><div class="g" style="left:129px;top:517.5px;height:19.5px"></div><div class="g" style="left:166px;top:517.5px;height:19.5px"></div><div class="g" style="left:202px;top:517.5px;height:19.5px"></div><div class="code" style="left:239.12px;top:518.5px"><span class="p">&lt;/</span><span class="t">div</span><span class="p">&gt;</span></div><div class="ln" style="left:-4.5px;top:538.0px;color:#8a9098">51</div><div class="g" style="left:93px;top:537.0px;height:19.5px"></div><div class="g" style="left:129px;top:537.0px;height:19.5px"></div><div class="g" style="left:166px;top:537.0px;height:19.5px"></div><div class="g" style="left:202px;top:537.0px;height:19.5px"></div><div class="code" style="left:239.12px;top:538.0px"><span class="p">&lt;</span><span class="t">br</span><span class="p">&gt;</span></div><div class="ln" style="left:-4.5px;top:557.5px;color:#8a9098">52</div><div class="g" style="left:93px;top:556.5px;height:19.5px"></div><div class="g" style="left:129px;top:556.5px;height:19.5px"></div><div class="ln" style="left:-4.5px;top:577.0px;color:#8a9098">53</div><div class="g" style="left:93px;top:576.0px;height:19.5px"></div><div class="g" style="left:129px;top:576.0px;height:19.5px"></div><div class="ln" style="left:-4.5px;top:596.5px;color:#8a9098">54</div><div class="g" style="left:93px;top:595.5px;height:19.5px"></div><div class="g" style="left:129px;top:595.5px;height:19.5px"></div><div class="code" style="left:166.56px;top:596.5px"><span class="p">&lt;</span><span class="t">div</span> <span class="a">class</span><span class="f">=</span><span class="q">"</span><span class="s">stricky</span><span class="q2">"</span> <span class="a">id</span><span class="f">=</span><span class="q">"</span><span class="s">strickyMenu</span><span class="q2">"</span> <span class="a">style</span><span class="f">=</span><span class="q">"</span><span class="ci">background-color</span><span class="f">:</span> <span class="w">&lt;?php</span> <span class="e">echo</span> <span class="v">$</span><span class="f">cms_setting</span><span class="f">[</span><span class="s">'menu_color'</span><span class="f">]</span> <span class="w">?&gt;</span><span class="f">;</span><span class="q2">"</span><span class="p">&gt;</span></div><div class="ln" style="left:-4.5px;top:616.0px;color:#8a9098">55</div><div class="g" style="left:93px;top:615.0px;height:19.5px"></div><div class="g" style="left:129px;top:615.0px;height:19.5px"></div><div class="g" style="left:166px;top:615.0px;height:19.5px"></div><div class="code" style="left:202.84px;top:616.0px"><span class="p">&lt;</span><span class="t">div</span> <span class="a">class</span><span class="f">=</span><span class="q">"</span><span class="s">container-md px-md-0</span><span class="q2">"</span><span class="p">&gt;</span></div><div class="ln" style="left:-4.5px;top:635.5px;color:#8a9098">56</div><div class="g" style="left:93px;top:634.5px;height:19.5px"></div><div class="g" style="left:129px;top:634.5px;height:19.5px"></div><div class="g" style="left:166px;top:634.5px;height:19.5px"></div><div class="code" style="left:202.84px;top:635.5px"><span class="p">&lt;</span><span class="t">nav</span> <span class="a">id</span><span class="f">=</span><span class="q">"</span><span class="s">nav</span><span class="q2">"</span> <span class="a">class</span><span class="f">=</span><span class="q">"</span><span class="s">navbar navbar-expand-lg</span><span class="q2">"</span> <span class="a">role</span><span class="f">=</span><span class="q">"</span><span class="s">navigation</span><span class="q2">"</span><span class="p">&gt;</span></div><div class="ln" style="left:-4.5px;top:655.0px;color:#8a9098">57</div><div class="g" style="left:93px;top:654.0px;height:19.5px"></div><div class="g" style="left:129px;top:654.0px;height:19.5px"></div><div class="g" style="left:166px;top:654.0px;height:19.5px"></div><div class="g" style="left:202px;top:654.0px;height:19.5px"></div><div class="g" style="left:238px;top:654.0px;height:19.5px"></div><div class="ln" style="left:-4.5px;top:674.5px;color:#8a9098">58</div><div class="g" style="left:93px;top:673.5px;height:19.5px"></div><div class="g" style="left:129px;top:673.5px;height:19.5px"></div><div class="g" style="left:166px;top:673.5px;height:19.5px"></div><div class="g" style="left:202px;top:673.5px;height:19.5px"></div><div class="g" style="left:238px;top:673.5px;height:19.5px"></div><div class="ln" style="left:-4.5px;top:694.0px;color:#8a9098">59</div><div class="g" style="left:93px;top:693.0px;height:19.5px"></div><div class="g" style="left:129px;top:693.0px;height:19.5px"></div><div class="g" style="left:166px;top:693.0px;height:19.5px"></div><div class="g" style="left:202px;top:693.0px;height:19.5px"></div><div class="g" style="left:238px;top:693.0px;height:19.5px"></div><div class="ln" style="left:-4.5px;top:713.5px;color:#8a9098">60</div><div class="g" style="left:93px;top:712.5px;height:19.5px"></div><div class="g" style="left:129px;top:712.5px;height:19.5px"></div><div class="g" style="left:166px;top:712.5px;height:19.5px"></div><div class="g" style="left:202px;top:712.5px;height:19.5px"></div><div class="g" style="left:238px;top:712.5px;height:19.5px"></div><div class="ln" style="left:-4.5px;top:733.0px;color:#8a9098">61</div><div class="g" style="left:93px;top:732.0px;height:19.5px"></div><div class="g" style="left:129px;top:732.0px;height:19.5px"></div><div class="g" style="left:166px;top:732.0px;height:19.5px"></div><div class="g" style="left:202px;top:732.0px;height:19.5px"></div><div class="g" style="left:238px;top:732.0px;height:19.5px"></div><div class="ln" style="left:-4.5px;top:752.5px;color:#8a9098">62</div><div class="g" style="left:93px;top:751.5px;height:19.5px"></div><div class="g" style="left:129px;top:751.5px;height:19.5px"></div><div class="g" style="left:166px;top:751.5px;height:19.5px"></div><div class="g" style="left:202px;top:751.5px;height:19.5px"></div><div class="g" style="left:238px;top:751.5px;height:19.5px"></div><div class="code" style="left:275.40px;top:752.5px"><span class="c">&lt;!-- Logo Ends --&gt;</span></div><div class="ln" style="left:-4.5px;top:772.0px;color:#8a9098">63</div><div class="g" style="left:93px;top:771.0px;height:19.5px"></div><div class="g" style="left:129px;top:771.0px;height:19.5px"></div><div class="g" style="left:166px;top:771.0px;height:19.5px"></div><div class="g" style="left:202px;top:771.0px;height:19.5px"></div><div class="g" style="left:238px;top:771.0px;height:19.5px"></div><div class="ln" style="left:-4.5px;top:791.5px;color:#8a9098">64</div><div class="g" style="left:93px;top:790.5px;height:19.5px"></div><div class="g" style="left:129px;top:790.5px;height:19.5px"></div><div class="g" style="left:166px;top:790.5px;height:19.5px"></div><div class="g" style="left:202px;top:790.5px;height:19.5px"></div><div class="g" style="left:238px;top:790.5px;height:19.5px"></div><div class="code" style="left:275.40px;top:791.5px"><span class="c">&lt;!-- Collapse Button Starts --&gt;</span></div><div class="ln" style="left:-4.5px;top:811.0px;color:#8a9098">65</div><div class="g" style="left:93px;top:810.0px;height:19.5px"></div><div class="g" style="left:129px;top:810.0px;height:19.5px"></div><div class="g" style="left:166px;top:810.0px;height:19.5px"></div><div class="g" style="left:202px;top:810.0px;height:19.5px"></div><div class="g" style="left:238px;top:810.0px;height:19.5px"></div><div class="code" style="left:275.40px;top:811.0px"><span class="p">&lt;</span><span class="t">button</span> <span class="a">class</span><span class="f">=</span><span class="q">"</span><span class="s">navbar-toggler</span><span class="q2">"</span> <span class="a">type</span><span class="f">=</span><span class="q">"</span><span class="s">button</span><span class="q2">"</span> <span class="a">data-bs-toggle</span><span class="f">=</span><span class="q">"</span><span class="s">collapse</span><span class="q2">"</span> <span class="a">data-bs-target</span><span class="f">=</span><span class="q">"</span><span class="s">#mainNav</span><span class="q2">"</span> <span class="a">aria-controls</span><span class="f">=</span><span class="q">"</span><span class="s">mainNav</span><span class="q2">"</span></div><div class="g" style="left:93px;top:829.5px;height:19.5px"></div><div class="g" style="left:129px;top:829.5px;height:19.5px"></div><div class="g" style="left:166px;top:829.5px;height:19.5px"></div><div class="g" style="left:202px;top:829.5px;height:19.5px"></div><div class="g" style="left:238px;top:829.5px;height:19.5px"></div><div class="code" style="left:284.47px;top:830.5px"><span class="a">aria-expanded</span><span class="f">=</span><span class="q">"</span><span class="s">false</span><span class="q2">"</span> <span class="a">aria-label</span><span class="f">=</span><span class="q">"</span><span class="s">Toggle navigation</span><span class="q2">"</span><span class="p">&gt;</span></div><div class="ln" style="left:-4.5px;top:850.0px;color:#8a9098">66</div><div class="g" style="left:93px;top:849.0px;height:19.5px"></div><div class="g" style="left:129px;top:849.0px;height:19.5px"></div><div class="g" style="left:166px;top:849.0px;height:19.5px"></div><div class="g" style="left:202px;top:849.0px;height:19.5px"></div><div class="g" style="left:238px;top:849.0px;height:19.5px"></div><div class="g" style="left:274px;top:849.0px;height:19.5px"></div><div class="code" style="left:311.68px;top:850.0px"><span class="p">&lt;</span><span class="t">span</span> <span class="a">class</span><span class="f">=</span><span class="q">"</span><span class="s">fa fa-bars</span><span class="q2">"</span><span class="p">&gt;</span><span class="p">&lt;/</span><span class="t">span</span><span class="p">&gt;</span></div><div class="ln" style="left:-4.5px;top:869.5px;color:#8a9098">67</div><div class="g" style="left:93px;top:868.5px;height:19.5px"></div><div class="g" style="left:129px;top:868.5px;height:19.5px"></div><div class="g" style="left:166px;top:868.5px;height:19.5px"></div><div class="g" style="left:202px;top:868.5px;height:19.5px"></div><div class="g" style="left:238px;top:868.5px;height:19.5px"></div><div class="code" style="left:275.40px;top:869.5px"><span class="p">&lt;/</span><span class="t">button</span><span class="p">&gt;</span></div><div class="ln" style="left:-4.5px;top:889.0px;color:#8a9098">68</div><div class="g" style="left:93px;top:888.0px;height:19.5px"></div><div class="g" style="left:129px;top:888.0px;height:19.5px"></div><div class="g" style="left:166px;top:888.0px;height:19.5px"></div><div class="g" style="left:202px;top:888.0px;height:19.5px"></div><div class="g" style="left:238px;top:888.0px;height:19.5px"></div><div class="code" style="left:275.40px;top:889.0px"><span class="c">&lt;!-- Collapse Button Ends --&gt;</span></div><div class="ln" style="left:-4.5px;top:908.5px;color:#8a9098">69</div><div class="g" style="left:93px;top:907.5px;height:19.5px"></div><div class="g" style="left:129px;top:907.5px;height:19.5px"></div><div class="g" style="left:166px;top:907.5px;height:19.5px"></div><div class="g" style="left:202px;top:907.5px;height:19.5px"></div><div class="g" style="left:238px;top:907.5px;height:19.5px"></div><div class="code" style="left:275.40px;top:908.5px"><span class="c">&lt;!-- Navbar Collapse Starts --&gt;</span></div><div class="ln" style="left:-4.5px;top:928.0px;color:#8a9098">70</div><div class="g" style="left:93px;top:927.0px;height:19.5px"></div><div class="g" style="left:129px;top:927.0px;height:19.5px"></div><div class="g" style="left:166px;top:927.0px;height:19.5px"></div><div class="g" style="left:202px;top:927.0px;height:19.5px"></div><div class="g" style="left:238px;top:927.0px;height:19.5px"></div><div class="code" style="left:275.40px;top:928.0px"><span class="p">&lt;</span><span class="t">div</span> <span class="a">id</span><span class="f">=</span><span class="q">"</span><span class="s">mainNav</span><span class="q2">"</span> <span class="a">class</span><span class="f">=</span><span class="q">"</span><span class="s">navbar-collapse collapse</span><span class="q2">"</span><span class="p">&gt;</span></div><div class="abs" style="left:0;top:303.0px;width:5px;height:292.5px;background:#93c48b"></div><div class="abs" style="left:0;top:654.0px;width:5px;height:97.5px;background:#f9ae58"></div><div class="abs" style="left:0;top:771.0px;width:5px;height:19.5px;background:#93c48b"></div><div id="mini"><div class="code" style="padding-left:0.00px"><span class="c">&lt;!-- Header Starts --&gt;</span></div><div class="code" style="padding-left:36.28px"><span class="p">&lt;</span><span class="t">header</span> <span class="a">class</span><span class="f">=</span><span class="q">"</span><span class="s">main-header</span><span class="q2">"</span><span class="p">&gt;</span></div><div class="code" style="padding-left:36.28px"><span class="c">&lt;!-- Header Container Starts --&gt;</span></div><div class="code" style="padding-left:36.28px"><span class="c">&lt;!-- Top Bar Starts --&gt;</span></div><div class="code" style="padding-left:72.56px"><span class="p">&lt;</span><span class="t">div</span> <span class="a">class</span><span class="f">=</span><span class="q">"</span><span class="s">top-bar-area bg-color</span><span class="q2">"</span><span class="p">&gt;</span></div><div class="code" style="padding-left:108.84px"><span class="p">&lt;</span><span class="t">div</span> <span class="a">class</span><span class="f">=</span><span class="q">"</span><span class="s">container-md px-md-0</span><span class="q2">"</span><span class="p">&gt;</span></div><div class="code" style="padding-left:108.84px"><span class="p">&lt;</span><span class="t">div</span> <span class="a">class</span><span class="f">=</span><span class="q">"</span><span class="s">row</span><span class="q2">"</span><span class="p">&gt;</span></div><div class="code" style="padding-left:145.12px"><span class="p">&lt;</span><span class="t">div</span> <span class="a">class</span><span class="f">=</span><span class="q">"</span><span class="s">col-md-6 col-sm-12</span><span class="q2">"</span><span class="p">&gt;</span><span class="w">&lt;?php</span> <span class="e">echo</span> <span class="v">$</span><span class="f">cms_setting</span><span class="f">[</span><span class="s">'working_hours'</span><span class="f">]</span><span class="f">;</span> <span class="w">?&gt;</span><span class="p">&lt;/</span><span class="t">div</span><span class="p">&gt;</span></div><div class="code" style="padding-left:145.12px"><span class="p">&lt;</span><span class="t">div</span> <span class="a">class</span><span class="f">=</span><span class="q">"</span><span class="s">col-md-6 col-sm-12</span><span class="q2">"</span><span class="p">&gt;</span></div><div class="code" style="padding-left:181.40px"><span class="p">&lt;</span><span class="t">ul</span> <span class="a">class</span><span class="f">=</span><span class="q">"</span><span class="s">list-inline float-end</span><span class="q2">"</span><span class="p">&gt;</span></div><div class="code" style="padding-left:217.68px"><span class="p">&lt;</span><span class="t">li</span> <span class="a">class</span><span class="f">=</span><span class="q">"</span><span class="s">list-inline-item</span><span class="q2">"</span><span class="p">&gt;</span><span class="p">&lt;</span><span class="t">a</span> <span class="a">href</span><span class="f">=</span><span class="q">"</span><span class="s">mailto:</span><span class="w">&lt;?php</span> <span class="e">echo</span> <span class="v">$</span><span class="f">cms_setting</span><span class="f">[</span><span class="s">'email'</span><span class="f">]</span><span class="f">;</span> <span class="w">?&gt;</span><span class="q2">"</span><span class="p">&gt;</span></div><div class="code" style="padding-left:253.96px"><span class="p">&lt;</span><span class="t">i</span> <span class="a">class</span><span class="f">=</span><span class="q">"</span><span class="s">fas fa-envelope</span><span class="q2">"</span><span class="p">&gt;</span><span class="p">&lt;/</span><span class="t">i</span><span class="p">&gt;</span> <span class="w">&lt;?php</span> <span class="e">echo</span> <span class="v">$</span><span class="f">cms_setting</span><span class="f">[</span><span class="s">'email'</span><span class="f">]</span><span class="f">;</span> <span class="w">?&gt;</span></div><div class="code" style="padding-left:217.68px"><span class="p">&lt;/</span><span class="t">a</span><span class="p">&gt;</span><span class="p">&lt;/</span><span class="t">li</span><span class="p">&gt;</span></div><div class="code" style="padding-left:217.68px"><span class="p">&lt;</span><span class="t">li</span> <span class="a">class</span><span class="f">=</span><span class="q">"</span><span class="s">list-inline-item</span><span class="q2">"</span><span class="p">&gt;</span><span class="p">&lt;</span><span class="t">i</span> <span class="a">class</span><span class="f">=</span><span class="q">"</span><span class="s">fas fa-phone-alt</span><span class="q2">"</span><span class="p">&gt;</span><span class="p">&lt;/</span><span class="t">i</span><span class="p">&gt;</span> <span class="w">&lt;?php</span> <span class="e">echo</span> <span class="v">$</span><span class="f">cms_setting</span><span class="f">[</span><span class="s">'mobile_no'</span><span class="f">]</span><span class="f">;</span> <span class="w">?&gt;</span><span class="p">&lt;/</span><span class="t">li</span><span class="p">&gt;</span></div><div class="code" style="padding-left:181.40px"><span class="w">&lt;?php</span></div><div class="code" style="padding-left:181.40px"><span class="f">$homeURL = base_url($cms_setting['url_alias']);</span></div><div class="code" style="padding-left:181.40px"><span class="f">if (is_loggedin()) {</span></div><div class="code" style="padding-left:217.68px"><span class="f">$dashboardLinkURL = base_url($cms_setting['url_alias'] . '/dashboard');</span></div><div class="code" style="padding-left:217.68px"><span class="f">$userRole = $this-</span><span class="p">&gt;</span><span class="f">session-</span><span class="p">&gt;</span><span class="f">userdata('loggedin_role_id');</span></div><div class="code" style="padding-left:217.68px"><span class="f">if ($userRole == 6 || $userRole == 7 ) {</span></div><div class="code" style="padding-left:253.96px"><span class="f">$getParent = $this-</span><span class="p">&gt;</span><span class="f">app_lib-</span><span class="p">&gt;</span><span class="f">getParent();</span></div><div class="code" style="padding-left:253.96px"><span class="f">if(!empty($getParent)) {</span></div><div class="code" style="padding-left:290.24px"><span class="f">$dashboardLinkURL = base_url('dashboard');</span></div><div class="code" style="padding-left:253.96px"><span class="f">}</span></div><div class="code" style="padding-left:217.68px"><span class="f">} ?</span><span class="p">&gt;</span></div><div class="code" style="padding-left:217.68px"><span class="p">&lt;</span><span class="t">li</span> <span class="a">class</span><span class="f">=</span><span class="q">"</span><span class="s">list-inline-item</span><span class="q2">"</span><span class="p">&gt;</span><span class="p">&lt;</span><span class="t">a</span> <span class="a">href</span><span class="f">=</span><span class="q">"</span><span class="w">&lt;?php</span> <span class="e">echo</span> <span class="v">$</span><span class="f">dashboardLinkURL</span><span class="f">;</span> <span class="w">?&gt;</span><span class="q2">"</span><span class="p">&gt;</span><span class="p">&lt;</span><span class="t">i</span> <span class="a">class</span><span class="f">=</span><span class="q">"</span><span class="s">fas fa-user-lock</span><span class="q2">"</span><span class="p">&gt;</span><span class="p">&lt;/</span><span class="t">i</span><span class="p">&gt;</span><span class="f"> Login</span><span class="p">&lt;/</span><span class="t">a</span><span class="p">&gt;</span></div><div class="code" style="padding-left:217.68px"><span class="p">&lt;/</span><span class="t">li</span><span class="p">&gt;</span></div><div class="code" style="padding-left:181.40px"><span class="w">&lt;?php</span> <span class="f">}</span> <span class="k">else</span> <span class="f">{</span> <span class="w">?&gt;</span></div><div class="code" style="padding-left:217.68px"><span class="p">&lt;</span><span class="t">li</span> <span class="a">class</span><span class="f">=</span><span class="q">"</span><span class="s">list-inline-item</span><span class="q2">"</span><span class="p">&gt;</span><span class="p">&lt;</span><span class="t">a</span> <span class="a">href</span><span class="f">=</span><span class="q">"</span><span class="w">&lt;?php</span> <span class="e">echo</span> <span class="fn">base_url</span><span class="f">(</span><span class="s">'dashboard'</span><span class="f">)</span><span class="f">;</span> <span class="w">?&gt;</span><span class="q2">"</span><span class="p">&gt;</span><span class="p">&lt;</span><span class="t">i</span> <span class="a">class</span><span class="f">=</span><span class="q">"</span><span class="s">fas fa-home</span><span class="q2">"</span><span class="p">&gt;</span><span class="p">&lt;/</span><span class="t">i</span><span class="p">&gt;</span><span class="f"> Dashboard</span><span class="p">&lt;/</span><span class="t">a</span></div><div class="code" style="padding-left:217.68px"><span class="p">&gt;</span><span class="p">&lt;/</span><span class="t">li</span><span class="p">&gt;</span></div><div class="code" style="padding-left:217.68px"><span class="p">&lt;</span><span class="t">marquee</span><span class="p">&gt;</span><span class="f"> ALLHO AKBAR </span><span class="p">&lt;/</span><span class="t">marquee</span><span class="p">&gt;</span></div><div class="code" style="padding-left:181.40px"><span class="w">&lt;?php</span> <span class="f">}</span> <span class="w">?&gt;</span></div><div class="code" style="padding-left:181.40px"><span class="p">&lt;/</span><span class="t">ul</span><span class="p">&gt;</span></div><div class="code" style="padding-left:145.12px"><span class="p">&lt;/</span><span class="t">div</span><span class="p">&gt;</span></div><div class="code" style="padding-left:108.84px"><span class="p">&lt;/</span><span class="t">div</span><span class="p">&gt;</span></div><div class="code" style="padding-left:108.84px"><span class="p">&lt;/</span><span class="t">div</span><span class="p">&gt;</span></div><div class="code" style="padding-left:72.56px"><span class="p">&lt;/</span><span class="t">div</span><span class="p">&gt;</span></div><div class="code" style="padding-left:36.28px"><span class="c">&lt;!-- Top Bar Ends --&gt;</span></div><div class="code" style="padding-left:36.28px"><span class="c">&lt;!-- Navbar Starts --&gt;</span></div><div class="code" style="padding-left:0.00px">&nbsp;</div><div class="code" style="padding-left:126.98px"><span class="p">&lt;</span><span class="t">div</span> <span class="a">classclass</span><span class="f">=</span><span class="q">"</span><span class="s">col-sm-12,align-items-center</span><span class="q2">"</span> <span class="a">style</span><span class="f">=</span><span class="q">"</span><span class="ci">background-color</span><span class="f">:</span><span class="cv">lavenderblush</span><span class="f">;</span><span class="q2">"</span><span class="p">&gt;</span></div><div class="code" style="padding-left:0.00px">&nbsp;</div><div class="code" style="padding-left:0.00px">&nbsp;</div><div class="code" style="padding-left:0.00px">&nbsp;</div><div class="code" style="padding-left:0.00px">&nbsp;</div><div class="code" style="padding-left:0.00px">&nbsp;</div><div class="code" style="padding-left:145.12px"><span class="c">&lt;!-- Logo Starts --&gt;</span></div><div class="code" style="padding-left:181.40px"><span class="p">&lt;</span><span class="t">a</span> <span class="a">href</span><span class="f">=</span><span class="q">"</span><span class="w">&lt;?php</span> <span class="e">echo</span> <span class="v">$</span><span class="f">homeURL</span> <span class="w">?&gt;</span><span class="s">main-slider-carousel owl-carousel owl-theme slide-nav</span><span class="q2">"</span><span class="p">&gt;</span></div><div class="code" style="padding-left:217.68px"><span class="p">&lt;</span><span class="t">img</span> <span class="a">src</span><span class="f">=</span><span class="q">"</span><span class="w">&lt;?php</span> <span class="e">echo</span> <span class="fn">base_url</span><span class="f">(</span><span class="s">'uploads/frontend/images/'</span> <span class="o">.</span> <span class="v">$</span><span class="f">cms_setting</span><span class="f">[</span><span class="s">'logo'</span><span class="f">]</span><span class="f">)</span><span class="f">;</span> <span class="w">?&gt;</span><span class="q2">"</span> <span class="a">alt</span><span class="f">=</span><span class="q">"</span><span class="s">Logo</span><span class="q2">"</span><span class="p">&gt;</span></div><div class="code" style="padding-left:181.40px"><span class="p">&lt;/</span><span class="t">a</span><span class="p">&gt;</span></div><div class="code" style="padding-left:145.12px"><span class="p">&lt;/</span><span class="t">div</span><span class="p">&gt;</span></div><div class="code" style="padding-left:145.12px"><span class="p">&lt;</span><span class="t">br</span><span class="p">&gt;</span></div><div class="code" style="padding-left:0.00px">&nbsp;</div><div class="code" style="padding-left:0.00px">&nbsp;</div><div class="code" style="padding-left:72.56px"><span class="p">&lt;</span><span class="t">div</span> <span class="a">class</span><span class="f">=</span><span class="q">"</span><span class="s">stricky</span><span class="q2">"</span> <span class="a">id</span><span class="f">=</span><span class="q">"</span><span class="s">strickyMenu</span><span class="q2">"</span> <span class="a">style</span><span class="f">=</span><span class="q">"</span><span class="ci">background-color</span><span class="f">:</span> <span class="w">&lt;?php</span> <span class="e">echo</span> <span class="v">$</span><span class="f">cms_setting</span><span class="f">[</span><span class="s">'menu_color'</span><span class="f">]</span> <span class="w">?&gt;</span><span class="f">;</span><span class="q2">"</span><span class="p">&gt;</span></div><div class="code" style="padding-left:108.84px"><span class="p">&lt;</span><span class="t">div</span> <span class="a">class</span><span class="f">=</span><span class="q">"</span><span class="s">container-md px-md-0</span><span class="q2">"</span><span class="p">&gt;</span></div><div class="code" style="padding-left:108.84px"><span class="p">&lt;</span><span class="t">nav</span> <span class="a">id</span><span class="f">=</span><span class="q">"</span><span class="s">nav</span><span class="q2">"</span> <span class="a">class</span><span class="f">=</span><span class="q">"</span><span class="s">navbar navbar-expand-lg</span><span class="q2">"</span> <span class="a">role</span><span class="f">=</span><span class="q">"</span><span class="s">navigation</span><span class="q2">"</span><span class="p">&gt;</span></div><div class="code" style="padding-left:0.00px">&nbsp;</div><div class="code" style="padding-left:0.00px">&nbsp;</div><div class="code" style="padding-left:0.00px">&nbsp;</div><div class="code" style="padding-left:0.00px">&nbsp;</div><div class="code" style="padding-left:0.00px">&nbsp;</div><div class="code" style="padding-left:181.40px"><span class="c">&lt;!-- Logo Ends --&gt;</span></div><div class="code" style="padding-left:0.00px">&nbsp;</div><div class="code" style="padding-left:181.40px"><span class="c">&lt;!-- Collapse Button Starts --&gt;</span></div><div class="code" style="padding-left:181.40px"><span class="p">&lt;</span><span class="t">button</span> <span class="a">class</span><span class="f">=</span><span class="q">"</span><span class="s">navbar-toggler</span><span class="q2">"</span> <span class="a">type</span><span class="f">=</span><span class="q">"</span><span class="s">button</span><span class="q2">"</span> <span class="a">data-bs-toggle</span><span class="f">=</span><span class="q">"</span><span class="s">collapse</span><span class="q2">"</span> <span class="a">data-bs-target</span><span class="f">=</span><span class="q">"</span><span class="s">#mainNav</span><span class="q2">"</span> <span class="a">aria-controls</span><span class="f">=</span><span class="q">"</span><span class="s">mainNav</span><span class="q2">"</span></div><div class="code" style="padding-left:190.47px"><span class="a">aria-expanded</span><span class="f">=</span><span class="q">"</span><span class="s">false</span><span class="q2">"</span> <span class="a">aria-label</span><span class="f">=</span><span class="q">"</span><span class="s">Toggle navigation</span><span class="q2">"</span><span class="p">&gt;</span></div><div class="code" style="padding-left:217.68px"><span class="p">&lt;</span><span class="t">span</span> <span class="a">class</span><span class="f">=</span><span class="q">"</span><span class="s">fa fa-bars</span><span class="q2">"</span><span class="p">&gt;</span><span class="p">&lt;/</span><span class="t">span</span><span class="p">&gt;</span></div><div class="code" style="padding-left:181.40px"><span class="p">&lt;/</span><span class="t">button</span><span class="p">&gt;</span></div><div class="code" style="padding-left:181.40px"><span class="c">&lt;!-- Collapse Button Ends --&gt;</span></div><div class="code" style="padding-left:181.40px"><span class="c">&lt;!-- Navbar Collapse Starts --&gt;</span></div><div class="code" style="padding-left:181.40px"><span class="p">&lt;</span><span class="t">div</span> <span class="a">id</span><span class="f">=</span><span class="q">"</span><span class="s">mainNav</span><span class="q2">"</span> <span class="a">class</span><span class="f">=</span><span class="q">"</span><span class="s">navbar-collapse collapse</span><span class="q2">"</span><span class="p">&gt;</span></div><div class="code" style="padding-left:217.68px"><span class="p">&lt;</span><span class="t">ul</span> <span class="a">class</span><span class="f">=</span><span class="q">"</span><span class="s">nav navbar-nav ms-auto navbar-right</span><span class="q2">"</span><span class="p">&gt;</span></div><div class="code" style="padding-left:253.96px"><span class="w">&lt;?php</span></div><div class="code" style="padding-left:253.96px"><span class="f">$branchID = $this-</span><span class="p">&gt;</span><span class="f">home_model-</span><span class="p">&gt;</span><span class="f">getDefaultBranch();</span></div><div class="code" style="padding-left:253.96px"><span class="f">$result = $this-</span><span class="p">&gt;</span><span class="f">home_model-</span><span class="p">&gt;</span><span class="f">menuList($branchID);</span></div><div class="code" style="padding-left:253.96px"><span class="f">foreach ($result as $key =</span><span class="p">&gt;</span><span class="f"> $row) {</span></div><div class="code" style="padding-left:290.24px"><span class="f">$active_menu = '';</span></div><div class="code" style="padding-left:290.24px"><span class="f">$submenu = '';</span></div><div class="code" style="padding-left:290.24px"><span class="f">$sub_active = '';</span></div><div class="code" style="padding-left:290.24px"><span class="f">$submenu_active= '';</span></div><div class="code" style="padding-left:290.24px"><span class="f">$currentURL = base_url(uri_string());</span></div><div class="code" style="padding-left:0.00px">&nbsp;</div><div class="code" style="padding-left:290.24px"><span class="f">if ($currentURL == $row['url']) {</span></div><div class="code" style="padding-left:326.52px"><span class="f">$active_menu = 'active';</span></div><div class="code" style="padding-left:290.24px"><span class="f">}</span></div><div class="code" style="padding-left:290.24px"><span class="f">if (!empty($row['submenu']) &amp;&amp; is_array($row['submenu'])) {</span></div><div class="code" style="padding-left:326.52px"><span class="f">$submenu = 'dropdown';</span></div><div class="code" style="padding-left:326.52px"><span class="f">$menuURL = array_column($row['submenu'],'url');</span></div><div class="code" style="padding-left:326.52px"><span class="f">if (in_array($currentURL, $menuURL)) {</span></div><div class="code" style="padding-left:362.80px"><span class="f">$submenu_active = 'active';</span></div><div class="code" style="padding-left:326.52px"><span class="f">}</span></div><div class="code" style="padding-left:326.52px"><span class="f">$row['title'] = $row['title'] . '</span><span class="p">&lt;</span><span class="t">span</span> <span class="a">class</span><span class="f">=</span><span class="q">"</span><span class="s">arrow</span><span class="q2">"</span><span class="p">&gt;</span><span class="p">&lt;/</span><span class="t">span</span><span class="p">&gt;</span><span class="f">';</span></div><div class="code" style="padding-left:290.24px"><span class="f">}</span></div><div class="code" style="padding-left:290.24px"><span class="f">if (!empty($row['new_tab'])) {</span></div><div class="code" style="padding-left:326.52px"><span class="f">$menu_tab = 'target="_blank"';</span></div><div class="code" style="padding-left:290.24px"><span class="f">}</span></div><div class="code" style="padding-left:290.24px"><span class="f">if ($cms_setting['online_admission'] == 0 &amp;&amp; $row['alias'] == 'admission') continue;</span></div><div class="code" style="padding-left:253.96px"><span class="f">?</span><span class="p">&gt;</span></div><div class="code" style="padding-left:290.24px"><span class="p">&lt;</span><span class="t">li</span> <span class="a">class</span><span class="f">=</span><span class="q">"</span><span class="w">&lt;?php</span> <span class="e">echo</span> <span class="v">$</span><span class="f">active_menu</span><span class="f">;</span> <span class="w">?&gt;</span><span class="s"> </span><span class="w">&lt;?php</span> <span class="e">echo</span> <span class="v">$</span><span class="f">submenu</span><span class="f">;</span> <span class="w">?&gt;</span><span class="s"> </span><span class="w">&lt;?php</span> <span class="e">echo</span> <span class="v">$</span><span class="f">submenu_active</span><span class="f">;</span> <span class="w">?&gt;</span><span class="q2">"</span><span class="p">&gt;</span></div><div class="code" style="padding-left:326.52px"><span class="p">&lt;</span><span class="t">a</span> <span class="a">href</span><span class="f">=</span><span class="q">"</span><span class="w">&lt;?php</span> <span class="e">echo</span> <span class="v">$</span><span class="f">row</span><span class="f">[</span><span class="s">'url'</span><span class="f">]</span><span class="f">;</span> <span class="w">?&gt;</span><span class="q2">"</span> <span class="a">class</span><span class="f">=</span><span class="q">"</span><span class="s">nav-link</span><span class="q2">"</span> <span class="f">&lt;</span><span class="f">?</span><span class="a">php</span> <span class="a">echo</span> <span class="f">$</span><span class="a">menu_tab</span><span class="f">;</span> <span class="f">?</span><span class="p">&gt;</span><span class="p">&gt;</span><span class="w">&lt;?php</span> <span class="e">echo</span> <span class="v">$</span><span class="f">row</span><span class="f">[</span><span class="s">'title'</span><span class="f">]</span></div><div class="code" style="padding-left:353.73px"><span class="f">; ?</span><span class="p">&gt;</span><span class="p">&lt;/</span><span class="t">a</span><span class="p">&gt;</span></div><div class="code" style="padding-left:326.52px"><span class="w">&lt;?php</span> <span class="k">if</span> <span class="f">(</span><span class="o">!</span><span class="k">empty</span><span class="f">(</span><span class="v">$</span><span class="f">row</span><span class="f">[</span><span class="s">'submenu'</span><span class="f">]</span><span class="f">)</span><span class="f">)</span> <span class="f">{</span> <span class="w">?&gt;</span></div><div class="code" style="padding-left:326.52px"><span class="p">&lt;</span><span class="t">ul</span> <span class="a">class</span><span class="f">=</span><span class="q">"</span><span class="s">dropdown-menu</span><span class="q2">"</span> <span class="a">role</span><span class="f">=</span><span class="q">"</span><span class="s">menu</span><span class="q2">"</span><span class="p">&gt;</span></div><div class="code" style="padding-left:362.80px"><span class="w">&lt;?php</span> <span class="k">foreach</span> <span class="f">(</span><span class="v">$</span><span class="f">row</span><span class="f">[</span><span class="s">'submenu'</span><span class="f">]</span> <span class="k">as</span> <span class="v">$</span><span class="f">row2</span><span class="f">)</span> <span class="f">{</span></div><div class="code" style="padding-left:399.08px"><span class="f">$active_menu = '';</span></div><div class="code" style="padding-left:399.08px"><span class="f">$new_tab = '';</span></div><div class="code" style="padding-left:399.08px"><span class="f">if ($currentURL == $row2['url']) {</span></div><div class="code" style="padding-left:435.36px"><span class="f">$active_menu = 'active';</span></div><div class="code" style="padding-left:399.08px"><span class="f">}</span></div><div class="code" style="padding-left:399.08px"><span class="f">if (!empty($row2['new_tab'])) {</span></div><div class="code" style="padding-left:435.36px"><span class="f">$new_tab = 'target="_blank"';</span></div><div class="code" style="padding-left:399.08px"><span class="f">}</span></div><div class="code" style="padding-left:399.08px"><span class="f">?</span><span class="p">&gt;</span></div><div class="code" style="padding-left:362.80px"><span class="p">&lt;</span><span class="t">li</span> <span class="a">class</span><span class="f">=</span><span class="q">"</span><span class="w">&lt;?php</span> <span class="e">echo</span> <span class="v">$</span><span class="f">active_menu</span><span class="f">;</span> <span class="w">?&gt;</span><span class="q2">"</span><span class="p">&gt;</span><span class="p">&lt;</span><span class="t">a</span> <span class="a">href</span><span class="f">=</span><span class="q">"</span><span class="w">&lt;?php</span> <span class="e">echo</span> <span class="v">$</span><span class="f">row2</span><span class="f">[</span><span class="s">'url'</span><span class="f">]</span><span class="f">;</span> <span class="w">?&gt;</span><span class="q2">"</span> <span class="f">&lt;</span><span class="f">?</span><span class="a">php</span> <span class="a">echo</span> <span class="f">$</span><span class="a">new_tab</span><span class="f">;</span> <span class="f">?</span><span class="p">&gt;</span><span class="p">&gt;</span><span class="w">&lt;?php</span> <span class="e">echo</span></div><div class="code" style="padding-left:399.08px"><span class="f">$row2['title']; ?</span><span class="p">&gt;</span><span class="p">&lt;/</span><span class="t">a</span><span class="p">&gt;</span><span class="p">&lt;/</span><span class="t">li</span><span class="p">&gt;</span></div><div class="code" style="padding-left:362.80px"><span class="w">&lt;?php</span> <span class="f">}</span> <span class="w">?&gt;</span></div><div class="code" style="padding-left:326.52px"><span class="p">&lt;/</span><span class="t">ul</span><span class="p">&gt;</span></div><div class="code" style="padding-left:290.24px"><span class="w">&lt;?php</span> <span class="f">}</span> <span class="w">?&gt;</span></div><div class="code" style="padding-left:290.24px"><span class="p">&lt;/</span><span class="t">li</span><span class="p">&gt;</span></div><div class="code" style="padding-left:253.96px"><span class="w">&lt;?php</span> <span class="f">}</span> <span class="w">?&gt;</span></div><div class="code" style="padding-left:253.96px"><span class="p">&lt;</span><span class="t">li</span> <span class="a">class</span><span class="f">=</span><span class="q">"</span><span class="s">nav-item active</span><span class="q2">"</span><span class="p">&gt;</span></div><div class="code" style="padding-left:253.96px"><span class="w">&lt;?php</span> <span class="k">if</span> <span class="f">(</span><span class="o">!</span><span class="fn">is_loggedin</span><span class="f">(</span><span class="f">)</span><span class="f">)</span> <span class="f">{</span> <span class="w">?&gt;</span></div><div class="code" style="padding-left:290.24px"><span class="p">&lt;</span><span class="t">a</span> <span class="a">href</span><span class="f">=</span><span class="q">"</span><span class="w">&lt;?php</span> <span class="e">echo</span> <span class="v">$</span><span class="f">dashboardLinkURL</span><span class="f">;</span> <span class="w">?&gt;</span><span class="q2">"</span> <span class="a">class</span><span class="f">=</span><span class="q">"</span><span class="s">btn btn-primary btn-block mb-0</span><span class="q2">"</span><span class="p">&gt;</span><span class="f">Login</span><span class="p">&lt;/</span><span class="t">a</span><span class="p">&gt;</span></div><div class="code" style="padding-left:253.96px"><span class="w">&lt;?php</span> <span class="f">}</span> <span class="k">else</span> <span class="f">{</span> <span class="w">?&gt;</span></div><div class="code" style="padding-left:290.24px"><span class="p">&lt;</span><span class="t">a</span> <span class="a">href</span><span class="f">=</span><span class="q">"</span><span class="w">&lt;?php</span> <span class="e">echo</span> <span class="fn">base_url</span><span class="f">(</span><span class="s">'dashboard'</span><span class="f">)</span><span class="f">;</span> <span class="w">?&gt;</span><span class="q2">"</span> <span class="a">class</span><span class="f">=</span><span class="q">"</span><span class="s">btn btn-primary btn-block mb-0</span><span class="q2">"</span><span class="p">&gt;</span><span class="f">Dashboard</span><span class="p">&lt;/</span><span class="t">a</span><span class="p">&gt;</span></div><div class="code" style="padding-left:253.96px"><span class="w">&lt;?php</span> <span class="f">}</span> <span class="w">?&gt;</span></div><div class="code" style="padding-left:253.96px"><span class="p">&lt;/</span><span class="t">li</span><span class="p">&gt;</span></div><div class="code" style="padding-left:217.68px"><span class="p">&lt;/</span><span class="t">ul</span><span class="p">&gt;</span></div><div class="code" style="padding-left:181.40px"><span class="p">&lt;/</span><span class="t">div</span><span class="p">&gt;</span></div><div class="code" style="padding-left:145.12px"><span class="c">&lt;!-- Navbar Collapse Ends --&gt;</span></div><div class="code" style="padding-left:145.12px"><span class="p">&lt;/</span><span class="t">nav</span><span class="p">&gt;</span></div><div class="code" style="padding-left:108.84px"><span class="p">&lt;/</span><span class="t">div</span><span class="p">&gt;</span></div><div class="code" style="padding-left:72.56px"><span class="p">&lt;/</span><span class="t">div</span><span class="p">&gt;</span></div><div class="code" style="padding-left:36.28px"><span class="p">&lt;/</span><span class="t">div</span><span class="p">&gt;</span></div><div class="code" style="padding-left:36.28px"><span class="c">&lt;!-- Navbar Ends --&gt;</span></div><div class="code" style="padding-left:0.00px"><span class="p">&lt;/</span><span class="t">header</span><span class="p">&gt;</span></div><div class="code" style="padding-left:0.00px">&nbsp;</div><div class="code" style="padding-left:0.00px"><span class="w">&lt;?php</span></div><div class="code" style="padding-left:0.00px"><span class="f">$news_list = $this-</span><span class="p">&gt;</span><span class="f">home_model-</span><span class="p">&gt;</span><span class="f">getLatestNews($branchID);</span></div><div class="code" style="padding-left:0.00px"><span class="f">if (!empty($news_list)) {</span></div><div class="code" style="padding-left:36.28px"><span class="f">$url_alias = $cms_setting['url_alias'];</span></div><div class="code" style="padding-left:36.28px"><span class="f">?</span><span class="p">&gt;</span></div><div class="code" style="padding-left:0.00px"><span class="p">&lt;</span><span class="t">div</span> <span class="a">class</span><span class="f">=</span><span class="q">"</span><span class="s">latest-news</span><span class="q2">"</span><span class="p">&gt;</span></div><div class="code" style="padding-left:36.28px"><span class="p">&lt;</span><span class="t">div</span> <span class="a">class</span><span class="f">=</span><span class="q">"</span><span class="s">container</span><span class="q2">"</span><span class="p">&gt;</span></div><div class="code" style="padding-left:72.56px"><span class="p">&lt;</span><span class="t">div</span> <span class="a">class</span><span class="f">=</span><span class="q">"</span><span class="s">d-flex justify-content-between</span><span class="q2">"</span><span class="p">&gt;</span></div><div class="code" style="padding-left:108.84px"><span class="p">&lt;</span><span class="t">div</span> <span class="a">class</span><span class="f">=</span><span class="q">"</span><span class="s">latest-title d-flex align-items-center text-center text-white bold-white text-uppercase</span><span class="q2">"</span><span class="p">&gt;</span></div><div class="code" style="padding-left:145.12px"><span class="p">&lt;</span><span class="t">i</span> <span class="a">class</span><span class="f">=</span><span class="q">"</span><span class="s">fa fa-bolt</span><span class="q2">"</span><span class="p">&gt;</span><span class="p">&lt;/</span><span class="t">i</span><span class="p">&gt;</span> <span class="w">&lt;?php</span> <span class="e">echo</span> <span class="fn">translate</span><span class="f">(</span><span class="s">'news'</span><span class="f">)</span><span class="f">;</span> <span class="w">?&gt;</span></div><div class="code" style="padding-left:108.84px"><span class="p">&lt;/</span><span class="t">div</span><span class="p">&gt;</span></div><div class="code" style="padding-left:108.84px"><span class="p">&lt;</span><span class="t">div</span> <span class="a">class</span><span class="f">=</span><span class="q">"</span><span class="s">news-updates-list overflow-hidden d-flex w-100</span><span class="q2">"</span> <span class="a">data-marquee</span><span class="f">=</span><span class="q">"</span><span class="s">true</span><span class="q2">"</span><span class="p">&gt;</span></div><div class="code" style="padding-left:145.12px"><span class="p">&lt;</span><span class="t">ul</span> <span class="a">class</span><span class="f">=</span><span class="q">"</span><span class="s">news</span><span class="q2">"</span><span class="p">&gt;</span></div><div class="code" style="padding-left:145.12px"><span class="w">&lt;?php</span> <span class="k">foreach</span> <span class="f">(</span><span class="v">$</span><span class="f">news_list</span> <span class="k">as</span> <span class="v">$</span><span class="f">value</span><span class="f">)</span> <span class="f">{</span> <span class="w">?&gt;</span></div><div class="code" style="padding-left:181.40px"><span class="p">&lt;</span><span class="t">li</span><span class="p">&gt;</span><span class="p">&lt;</span><span class="t">a</span> <span class="a">href</span><span class="f">=</span><span class="q">"</span><span class="w">&lt;?php</span> <span class="e">echo</span> <span class="fn">base_url</span><span class="f">(</span><span class="v">$</span><span class="f">url_alias</span> <span class="o">.</span> <span class="s">'/news_view/'</span> <span class="o">.</span> <span class="v">$</span><span class="f">value</span><span class="f">[</span><span class="s">'alias'</span><span class="f">]</span><span class="f">)</span><span class="f">;</span> <span class="w">?&gt;</span><span class="q2">"</span><span class="p">&gt;</span><span class="p">&lt;</span><span class="t">strong</span><span class="p">&gt;</span><span class="w">&lt;?php</span> <span class="e">echo</span></div><div class="code" style="padding-left:217.68px"><span class="f">date_format(date_create($value['date']),"d M Y"); ?</span><span class="p">&gt;</span><span class="p">&lt;/</span><span class="t">strong</span><span class="p">&gt;</span><span class="f"> - </span><span class="w">&lt;?php</span> <span class="e">echo</span> <span class="v">$</span><span class="f">value</span><span class="f">[</span><span class="s">'title'</span><span class="f">]</span><span class="f">;</span> <span class="w">?&gt;</span></div><div class="code" style="padding-left:217.68px"><span class="f">$value['title']; ?</span><span class="p">&gt;</span><span class="p">&lt;/</span><span class="t">a</span><span class="p">&gt;</span><span class="p">&lt;/</span><span class="t">li</span><span class="p">&gt;</span></div><div class="code" style="padding-left:145.12px"><span class="w">&lt;?php</span> <span class="f">}</span> <span class="w">?&gt;</span></div><div class="code" style="padding-left:108.84px"><span class="p">&lt;/</span><span class="t">ul</span><span class="p">&gt;</span></div><div class="code" style="padding-left:108.84px"><span class="p">&lt;/</span><span class="t">div</span><span class="p">&gt;</span></div><div class="code" style="padding-left:108.84px"><span class="p">&lt;</span><span class="t">div</span> <span class="a">class</span><span class="f">=</span><span class="q">"</span><span class="s">carousel-btns text-center text-white</span><span class="q2">"</span><span class="p">&gt;</span></div><div class="code" style="padding-left:145.12px"><span class="p">&lt;</span><span class="t">span</span> <span class="a">class</span><span class="f">=</span><span class="q">"</span><span class="s">prev-news</span><span class="q2">"</span><span class="p">&gt;</span><span class="p">&lt;</span><span class="t">i</span> <span class="a">class</span><span class="f">=</span><span class="q">"</span><span class="s">fa fa-angle-left</span><span class="q2">"</span><span class="p">&gt;</span><span class="p">&lt;/</span><span class="t">i</span><span class="p">&gt;</span><span class="p">&lt;/</span><span class="t">span</span><span class="p">&gt;</span> <span class="w">&lt;?php</span> <span class="e">echo</span> <span class="v">$</span><span class="f">all</span><span class="f">;</span> <span class="w">?&gt;</span><span class="p">&lt;/</span><span class="t">span</span><span class="p">&gt;</span></div><div class="code" style="padding-left:108.84px"><span class="p">&lt;/</span><span class="t">div</span><span class="p">&gt;</span></div><div class="code" style="padding-left:72.56px"><span class="p">&lt;/</span><span class="t">div</span><span class="p">&gt;</span></div><div class="code" style="padding-left:36.28px"><span class="p">&lt;/</span><span class="t">div</span><span class="p">&gt;</span></div><div class="code" style="padding-left:0.00px"><span class="p">&lt;/</span><span class="t">div</span><span class="p">&gt;</span></div><div class="code" style="padding-left:0.00px"><span class="w">&lt;?php</span> <span class="f">}</span> <span class="w">?&gt;</span></div></div><div class="abs" style="left:1586px;top:57px;width:9px;height:859.5px;background:#414851;border-radius:3px"></div><div class="abs" style="left:1586px;top:168px;width:9px;height:182px;background:#5f656d;border-radius:3px"></div></div><div id="status" class="abs"><div class="abs" style="left:1px;top:7px;width:20px;height:14px;border:2px solid #6d7076;border-radius:3px;background:#e8e9eb"></div><div class="abs" style="left:1px;top:7px;width:7px;height:14px;background:#6d7076;border-radius:3px 0 0 3px"></div><div class="abs" style="left:36px;top:7px;font-size:15px;color:#222;white-space:pre">Line 41, Column 1</div><div class="abs" style="left:1628px;top:7px;font-size:15px;color:#222;white-space:pre">Tab Size: 4</div><div class="abs" style="left:1803px;top:7px;font-size:15px;color:#222;white-space:pre">PHP</div></div><div class="abs" style="left:1559px;top:266px;width:344px;height:44px;border:1px solid rgba(140,150,170,0.35);border-right:none;background:linear-gradient(to bottom,rgba(78,86,102,0.55) 0,rgba(70,78,94,0.5) 48%,rgba(20,24,30,0.45) 52%,rgba(24,28,36,0.45) 78%,rgba(60,68,84,0.5) 100%)"></div><svg class="abs" style="left:1573px;top:275px" width="26" height="27" viewBox="0 0 26 27"><path d="M21 2V25" stroke="#85733a" stroke-width="2.6" fill="none" stroke-linecap="round"/><path d="M8 10C9 6 16 6 16 11C16 14 13 15 11 14M12 14C17 14 20 17 19 20C18 23 13 23 9 20C6 18 4 17 3 18" stroke="#85733a" stroke-width="2.6" fill="none" stroke-linecap="round"/></svg><div class="abs" style="left:1630px;top:277px;font-size:14.2px;font-weight:bold;color:#73777e;white-space:pre;line-height:18px">English</div><svg class="abs" style="left:1647px;top:302px" width="10" height="5"><path d="M0 0H10L5 5z" fill="#8b9098"/></svg><svg class="abs" style="left:1707px;top:285px" width="26" height="13" viewBox="0 0 26 13"><defs><pattern id="kp" width="2" height="2" patternUnits="userSpaceOnUse"><rect width="2" height="2" fill="#565a61"/><rect width="1" height="1" fill="#767a81"/><rect x="1" y="1" width="1" height="1" fill="#767a81"/></pattern></defs><path d="M5 1H21L25 9H1z" fill="url(#kp)"/><rect x="1" y="10" width="24" height="2" fill="#3d424a"/></svg><svg class="abs" style="left:1758px;top:278px" width="19" height="24" viewBox="0 0 19 24"><path d="M6 1H13V9L17.5 19Q18 23 14 23H5Q1 23 1.5 19L6 9z" fill="#5e6269"/><path d="M7 2H9V9L5 18" stroke="#7d8188" stroke-width="1" fill="none"/></svg><svg class="abs" style="left:1803px;top:279px" width="24" height="23" viewBox="-12 -11.5 24 23"><g fill="#57606c"><rect x="-2" y="-11.5" width="4" height="6" transform="rotate(0)"/><rect x="-2" y="-11.5" width="4" height="6" transform="rotate(30)"/><rect x="-2" y="-11.5" width="4" height="6" transform="rotate(60)"/><rect x="-2" y="-11.5" width="4" height="6" transform="rotate(90)"/><rect x="-2" y="-11.5" width="4" height="6" transform="rotate(120)"/><rect x="-2" y="-11.5" width="4" height="6" transform="rotate(150)"/><rect x="-2" y="-11.5" width="4" height="6" transform="rotate(180)"/><rect x="-2" y="-11.5" width="4" height="6" transform="rotate(210)"/><rect x="-2" y="-11.5" width="4" height="6" transform="rotate(240)"/><rect x="-2" y="-11.5" width="4" height="6" transform="rotate(270)"/><rect x="-2" y="-11.5" width="4" height="6" transform="rotate(300)"/><rect x="-2" y="-11.5" width="4" height="6" transform="rotate(330)"/><circle r="8.5"/></g><circle r="4" fill="#262b33"/></svg><svg class="abs" style="left:1852px;top:276px" width="25" height="25" viewBox="0 0 25 25"><path d="M5 14H19Q20 5 12.5 5Q5 5 5 13.5Q5 21 12.5 21Q17 21 19 17" stroke="#2b7bbd" stroke-width="4" fill="none"/><ellipse cx="12.5" cy="12.5" rx="12" ry="5" transform="rotate(-45 12.5 12.5)" fill="none" stroke="#9c7d2a" stroke-width="1.8"/></svg><div class="abs" style="left:1897px;top:280px;width:14px;height:21px;border-radius:10px;background:#2d5a8e"></div></body></html>
